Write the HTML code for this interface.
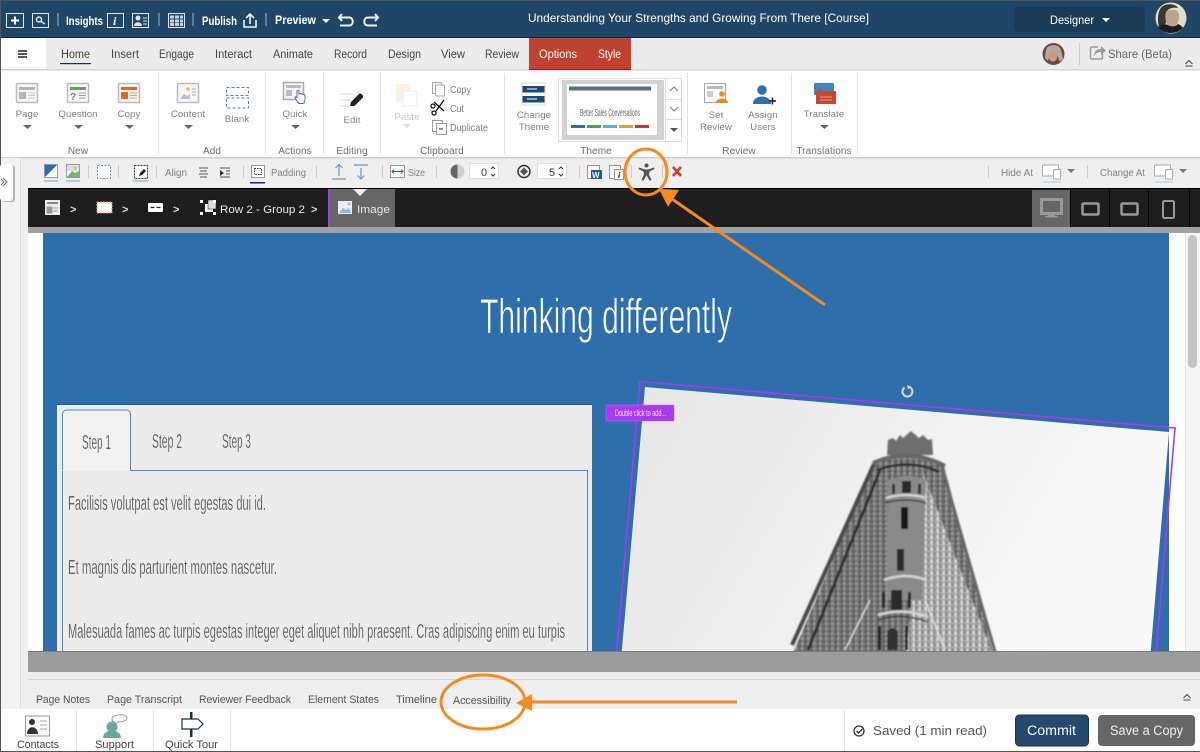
<!DOCTYPE html>
<html><head><meta charset="utf-8"><title>Understanding Your Strengths</title>
<style>
html,body{margin:0;padding:0;background:#fff;width:1200px;height:752px;overflow:hidden}
svg{display:block;position:absolute;left:0;top:0;filter:blur(.3px)}
text{font-family:"Liberation Sans",sans-serif}
.w{fill:#fff;font-size:12px;font-weight:bold}
.tt{fill:#fff;font-size:12px}
.m{fill:#444;font-size:11.5px}
.r{fill:#808080;font-size:9.6px;text-anchor:middle;letter-spacing:.1px}
.g{fill:#6e6e6e;font-size:10px;text-anchor:middle;letter-spacing:.1px}
.t{fill:#808080;font-size:10px}
.b{fill:#555;font-size:11px}
.n{fill:#4a4a4a;font-size:20px;stroke:#ececec;stroke-width:.3px}
.c{fill:#e8e8e8;font-size:11px}
</style></head><body>
<svg width="1200" height="752" viewBox="0 0 1200 752" xmlns="http://www.w3.org/2000/svg">
<defs>
<linearGradient id="sky" x1="0" y1="0" x2="1" y2="0.3"><stop offset="0" stop-color="#e6e6e6"/><stop offset="1" stop-color="#f9f9f9"/></linearGradient>
<pattern id="tex" width="6" height="5" patternUnits="userSpaceOnUse"><rect width="6" height="5" fill="#737373"/><rect x="1" y="0" width="1.500" height="3" fill="#4a4a4a"/><rect x="3.500" y="2" width="1.500" height="3" fill="#a5a5a5"/></pattern>
<pattern id="tex2" width="6" height="6" patternUnits="userSpaceOnUse"><rect width="6" height="6" fill="#a8a8a8"/><rect x="1" y="1" width="1.500" height="4" fill="#ececec"/><rect x="3.500" y="0" width="1.500" height="4" fill="#777"/></pattern>
<filter id="soft" x="-5%" y="-5%" width="110%" height="110%"><feGaussianBlur stdDeviation=".7"/></filter>
<clipPath id="cv"><rect x="28" y="233" width="1157" height="418"/></clipPath>
<clipPath id="imgc"><polygon points="645,387 1169,432 1150,651 622,651"/></clipPath>
</defs>

<!-- page base -->
<rect width="1200" height="752" fill="#fff"/>
<rect x="0" y="157" width="1200" height="552" fill="#efefef"/>

<!-- top bar -->
<rect width="1200" height="38" fill="#1f4666"/>
<rect width="1200" height="1" fill="#555"/>
<rect y="37" width="1200" height="1" fill="#10264a"/>
<g fill="none" stroke="#dfe6ec" stroke-width="1">
<rect x="6.500" y="13.500" width="17" height="14"/><path d="M15 16.500v8M11 20.500h8" stroke-width="2" stroke="#fff"/>
<rect x="32.500" y="13.500" width="16" height="14"/><circle cx="39" cy="19.500" r="2.500" stroke-width="1.500"/><path d="M41 21.500l4 2.500" stroke-width="1.500"/>
<rect x="107.500" y="13.500" width="16" height="14"/>
<rect x="132.500" y="13.500" width="16" height="14"/>
<rect x="168.500" y="13.500" width="16" height="14"/>
<path d="M58 13v13M159 13v13M193 13v13M266 13v13" stroke="#9fb3c4"/>
</g>
<text x="113" y="25" font-size="12" font-style="italic" font-weight="bold" fill="#fff" style="font-family:'Liberation Serif',serif">i</text>
<circle cx="138" cy="18" r="2.500" fill="#dfe6ec"/><path d="M134 26c0-5 8-5 8 0z" fill="#dfe6ec"/><path d="M143 18h4M143 21h4M143 24h4" stroke="#dfe6ec"/>
<g fill="#c5d1dc"><rect x="170" y="15.500" width="4" height="3"/><rect x="175" y="15.500" width="4" height="3"/><rect x="180" y="15.500" width="3" height="3"/><rect x="170" y="19.500" width="4" height="3"/><rect x="175" y="19.500" width="4" height="3"/><rect x="180" y="19.500" width="3" height="3"/><rect x="170" y="23" width="4" height="3"/><rect x="175" y="23" width="4" height="3"/><rect x="180" y="23" width="3" height="3"/></g>
<path d="M244 20v7h12v-7M250 24V14M246 18l4-4 4 4" fill="none" stroke="#eef2f5" stroke-width="1.600"/>
<text class="w" x="66" y="25" textLength="37" lengthAdjust="spacingAndGlyphs">Insights</text>
<text class="w" x="202" y="25" textLength="35" lengthAdjust="spacingAndGlyphs">Publish</text>
<text class="w" x="275" y="24" textLength="41" lengthAdjust="spacingAndGlyphs">Preview</text>
<path d="M322 19h8l-4 4z" fill="#fff"/>
<path d="M342 14l-3 3.500 3 3.500M340 17.500h9c5 0 5 8 0 8h-9" fill="none" stroke="#eef2f5" stroke-width="2"/>
<path d="M375 14l3 3.500-3 3.500M377 17.500h-9c-5 0-5 8 0 8h9" fill="none" stroke="#eef2f5" stroke-width="2"/>
<text class="tt" x="528" y="22" textLength="341" lengthAdjust="spacingAndGlyphs">Understanding Your Strengths and Growing From There [Course]</text>
<rect x="1014" y="7" width="131" height="25" rx="4" fill="#1b3a55"/>
<text class="tt" x="1050" y="24" textLength="44" lengthAdjust="spacingAndGlyphs">Designer</text>
<path d="M1102 18h8l-4 4z" fill="#fff"/>
<circle cx="1171" cy="18" r="15.500" fill="#dedecb"/>
<path d="M1159 27c-2-8-1-18 4-21 5-3 13-2 15 2-4-1-9 0-11 3-1 3-1 6 0 9l-3 7z" fill="#3a352c"/>
<path d="M1166 12c3-3 10-3 12 0 2 4 1 10-2 13-3 2-7 2-9-1-2-3-2-9-1-12z" fill="#b9a68c"/>
<path d="M1158 27c4-3 7-3 10-2 3 2 7 2 10-1 2 1 4 2 5 4-3 3-7 5-12 5-6 0-10-2-13-6z" fill="#1c1c1c"/>

<!-- menu row -->
<rect y="38" width="1200" height="31" fill="#ececec"/>
<rect y="38" width="46" height="32" fill="#fff"/>
<rect y="69" width="1200" height="1.500" fill="#d4d4d4"/>
<path d="M18 51h9M18 54h9M18 57h9" stroke="#222" stroke-width="1.500"/>
<rect x="529" y="38" width="102" height="32" fill="#bf4230"/><rect x="529" y="69" width="102" height="1" fill="#b01818"/>
<text class="m" x="61" y="58" textLength="29" lengthAdjust="spacingAndGlyphs">Home</text>
<text class="m" x="111" y="58" textLength="28" lengthAdjust="spacingAndGlyphs">Insert</text>
<text class="m" x="159" y="58" textLength="35" lengthAdjust="spacingAndGlyphs">Engage</text>
<text class="m" x="215" y="58" textLength="37" lengthAdjust="spacingAndGlyphs">Interact</text>
<text class="m" x="273" y="58" textLength="40" lengthAdjust="spacingAndGlyphs">Animate</text>
<text class="m" x="334" y="58" textLength="33" lengthAdjust="spacingAndGlyphs">Record</text>
<text class="m" x="388" y="58" textLength="33" lengthAdjust="spacingAndGlyphs">Design</text>
<text class="m" x="441" y="58" textLength="24" lengthAdjust="spacingAndGlyphs">View</text>
<text class="m" x="485" y="58" textLength="34" lengthAdjust="spacingAndGlyphs">Review</text>
<text x="539" y="58" font-size="11.500" fill="#fff" textLength="38" lengthAdjust="spacingAndGlyphs">Options</text>
<text x="598" y="58" font-size="11.500" fill="#fff" textLength="23" lengthAdjust="spacingAndGlyphs">Style</text>
<rect x="60" y="63" width="31" height="1.200" fill="#1c2f5c"/>
<circle cx="1053.500" cy="54" r="11" fill="#6b4a3a"/><path d="M1046 50c1-6 13-7 15 0l2 9-3 3-3-8c-3-1-5-1-7 0l-2 7-3-3z" fill="#b0aca4"/><ellipse cx="1053" cy="56" rx="4.500" ry="5.500" fill="#c99a7f"/>
<path d="M1079.500 43v22" stroke="#ccc"/>
<path d="M1098 47h-6a1.500 1.500 0 0 0-1.500 1.500v9a1.500 1.500 0 0 0 1.500 1.500h9a1.500 1.500 0 0 0 1.500-1.500V54" fill="none" stroke="#999" stroke-width="1.500"/>
<path d="M1094 56c0-5 3-7 7-7v-3l5 4.500-5 4.500v-3c-3 0-5 1-7 4z" fill="#999"/>
<text x="1108" y="58" font-size="12" fill="#666" textLength="64" lengthAdjust="spacingAndGlyphs">Share (Beta)</text>
<path d="M1185.500 64l3.500-3.500 3.500 3.500M1185.500 66h7" fill="none" stroke="#444" stroke-width="1"/>

<!-- ribbon -->
<rect y="70.500" width="1200" height="86.500" fill="#fff"/>
<rect y="157" width="1200" height="1.500" fill="#d0d0d0"/>
<g stroke="#e2e2e2"><path d="M158.500 73v81M265.500 73v81M323.500 73v81M380.500 73v81M504.500 73v81M687.500 73v81M791.500 73v81M857.500 73v81"/></g>
<g><rect x="16.500" y="83.500" width="21" height="19" rx="1" fill="#f6f6f6" stroke="#bbb" stroke-width="1.500"/><rect x="19" y="87" width="16" height="3" fill="#b5b5b5"/><rect x="19" y="92" width="7" height="7" fill="#b5b5b5"/><path d="M28 93h7M28 95.500h7M28 98h7" stroke="#c8c8c8"/></g>
<g><rect x="67.500" y="83.500" width="21" height="19" rx="1" fill="#f6f6f6" stroke="#bbb" stroke-width="1.500"/><rect x="70" y="87" width="16" height="3" fill="#6d9b60"/><text x="70" y="100" font-size="10" font-weight="bold" fill="#56934b">?</text><path d="M79 93h7M79 95.500h7M79 98h7" stroke="#8ab080"/></g>
<g><rect x="118.500" y="83.500" width="21" height="19" rx="1" fill="#f6f6f6" stroke="#bbb" stroke-width="1.500"/><rect x="121" y="87" width="16" height="3" fill="#dd6a28"/><rect x="121" y="92" width="7" height="7" fill="#dd6a28"/><path d="M130 93h7M130 95.500h7M130 98h7" stroke="#eba07a"/></g>
<g><rect x="177.500" y="83.500" width="21" height="19" rx="1" fill="#f8f8f8" stroke="#bbb" stroke-width="1.500"/><path d="M180 99l4-5 3 2 3-2v5z" fill="#a9c4de"/><circle cx="188" cy="89" r="1.800" fill="#f0b050"/><path d="M192 89h4M192 92h4M192 95h4" stroke="#aaa"/></g>
<g fill="none" stroke="#4d84bd" stroke-dasharray="3 2"><rect x="226.500" y="87.500" width="22" height="8"/><rect x="226.500" y="98" width="22" height="10"/></g>
<g><rect x="283.500" y="82.500" width="20" height="17" fill="#f6f6f6" stroke="#aaa" stroke-width="1.500"/><rect x="286" y="85" width="15" height="3" fill="#bbb"/><rect x="286" y="90" width="6" height="6" fill="#bbb"/></g>
<path d="M297 91c0-1 2-1 2 0v3c1-1 2 0 2 0 1-.5 2 0 2 .5 1-.5 2 0 2 1v4c0 2-1 4-2 4h-4c-1-1-3-4-4-6 0-1 1-1 2 0z" fill="#fff" stroke="#3674b5"/>
<g stroke="#d5d5d5"><path d="M340 94h14M340 100h11M340 106h8"/></g>
<path d="M350 106l1-4 8-8c1-1 3 0 3.500 1s1 2 0 3l-8 8z" fill="#222"/>
<g opacity=".55"><rect x="396" y="84" width="15" height="19" rx="1" fill="#fbe9cf"/><rect x="403" y="91" width="14" height="15" fill="#fff" stroke="#e0e0e0"/></g>
<g fill="#fff" stroke="#aaa"><rect x="432.500" y="82.500" width="9" height="11"/><rect x="435.500" y="85" width="9" height="11"/></g>
<path d="M434 102l10 9M444 100l-8 11" stroke="#111" stroke-width="1.300"/><circle cx="434" cy="113" r="2" fill="none" stroke="#111" stroke-width="1.300"/><circle cx="433" cy="106" r="2" fill="none" stroke="#111" stroke-width="1.300"/>
<g fill="#fff" stroke="#999"><rect x="432.500" y="120.500" width="10" height="11"/><rect x="436.500" y="123.500" width="10" height="11"/></g><path d="M439 129h4" stroke="#222"/>
<text class="t" x="450" y="93" textLength="21" lengthAdjust="spacingAndGlyphs">Copy</text>
<text class="t" x="450" y="112" textLength="14" lengthAdjust="spacingAndGlyphs">Cut</text>
<text class="t" x="450" y="131" textLength="38" lengthAdjust="spacingAndGlyphs">Duplicate</text>
<rect x="522" y="83" width="23" height="22" fill="#fff" stroke="#ddd"/>
<rect x="522.500" y="86" width="22" height="6.500" fill="#1c4a73"/><rect x="522.500" y="96" width="22" height="6.500" fill="#1c4a73"/>
<path d="M527 89h10M527 99h10" stroke="#fff"/>
<rect x="558.500" y="78.500" width="123" height="63" fill="#fff" stroke="#ddd"/>
<rect x="562" y="80" width="102" height="60" fill="#d2d2d2"/><rect x="567" y="84" width="90" height="51" fill="#fff"/>
<rect x="569" y="86.500" width="82" height="4" fill="#5c6e7a"/>
<text x="580" y="116" font-size="10" fill="#666" textLength="60" lengthAdjust="spacingAndGlyphs">Better Sales Conversations</text>
<rect x="571" y="125" width="14" height="3" fill="#2e6cab"/><rect x="587" y="125" width="14" height="3" fill="#4aa648"/><rect x="603" y="125" width="14" height="3" fill="#52b4d6"/><rect x="619" y="125" width="14" height="3" fill="#eb9a3b"/><rect x="635" y="125" width="14" height="3" fill="#cf3030"/>
<path d="M665.500 79v62M666 99.500h15M666 119.500h15" stroke="#ddd"/>
<path d="M670 91l4-4 4 4M670 107l4 4 4-4" fill="none" stroke="#777"/><path d="M670 128h8l-4 4z" fill="#555"/>
<rect x="704.500" y="83.500" width="21" height="19" fill="#fafafa" stroke="#aaa"/><rect x="707" y="86" width="16" height="3" fill="#bbb"/><rect x="707" y="91" width="6" height="6" fill="#ccc"/>
<circle cx="722" cy="94" r="2.800" fill="#f08a24"/><path d="M716 103c0-6 12-6 12 0z" fill="#f08a24"/>
<circle cx="762" cy="90" r="4.800" fill="#2f70b2"/><path d="M753 104c0-10 18-10 18 0z" fill="#2f70b2"/><path d="M769 101h7M772.500 97.500v7" stroke="#111" stroke-width="1.400"/>
<rect x="814" y="83" width="20" height="12" fill="#3f86c4"/><rect x="816" y="91" width="20" height="13" fill="#c8482f"/><path d="M822 88l-5 4h5z" fill="#c8482f"/><path d="M820 97h12M820 100h12" stroke="#e39a88"/>
<g fill="#666"><path d="M23 125h9l-4.500 4zM74 125h9l-4.500 4zM125 125h9l-4.500 4zM184 125h9l-4.500 4zM291 125h9l-4.500 4zM820 125h9l-4.500 4z"/></g>
<path d="M403 124h8l-4 4z" fill="#ddd"/>
<text class="r" x="27" y="117">Page</text><text class="r" x="78" y="117">Question</text><text class="r" x="129" y="117">Copy</text>
<text class="r" x="188" y="117">Content</text><text class="r" x="237" y="122">Blank</text><text class="r" x="295" y="117">Quick</text><text class="r" x="352" y="123">Edit</text>
<text class="r" x="407" y="120" style="fill:#c8c8c8">Paste</text>
<text class="r" x="534" y="118">Change</text><text class="r" x="534" y="130">Theme</text>
<text class="r" x="716" y="118">Set</text><text class="r" x="716" y="130">Review</text><text class="r" x="763" y="118">Assign</text><text class="r" x="763" y="130">Users</text><text class="r" x="824" y="117">Translate</text>
<text class="g" x="78" y="154">New</text><text class="g" x="212" y="154">Add</text><text class="g" x="295" y="154">Actions</text><text class="g" x="352" y="154">Editing</text><text class="g" x="442" y="154">Clipboard</text><text class="g" x="596" y="154">Theme</text><text class="g" x="739" y="154">Review</text><text class="g" x="824" y="154">Translations</text>

<!-- toolbar -->
<rect y="158.500" width="1200" height="30" fill="#efefef"/>
<rect x="20" y="158" width="1" height="551" fill="#dcdcdc"/>
<g><rect x="44.500" y="164.500" width="13" height="13" fill="#fff" stroke="#999"/><path d="M45 165h12L45 177z" fill="#2f6cab"/><path d="M44 181h14" stroke="#9dbcd8" stroke-width="1.500"/></g>
<g><rect x="66.500" y="164.500" width="13" height="13" fill="#fff" stroke="#999"/><rect x="67" y="165" width="12" height="6" fill="#cfe3f3"/><path d="M67 177l5-6 3 2 4-2v6z" fill="#73b85f"/><circle cx="75" cy="168" r="1.500" fill="#f0b050"/><path d="M66 181h14" stroke="#9dbcd8" stroke-width="1.500"/></g>
<rect x="97.500" y="165.500" width="13" height="13" fill="#fff" stroke="#5e93c9" stroke-dasharray="2 1.500"/>
<g><rect x="134.500" y="165.500" width="13" height="13" fill="#fff" stroke="#333" stroke-dasharray="2 1"/><path d="M139 176l1-3 4-4 2 2-4 4z" fill="#222"/><path d="M133 181h15" stroke="#9dbcd8" stroke-width="1.500"/></g>
<g stroke="#ccc"><path d="M88.500 165v13M118.500 165v13M156.500 165v13M243.500 165v13M316.500 165v13M382.500 165v13M436.500 165v13M579.500 165v13M631.500 165v13M662.500 165v13M988.500 165v13M1087.500 165v13"/></g>
<text class="t" x="165" y="176" textLength="22" lengthAdjust="spacingAndGlyphs">Align</text>
<path d="M199 168h9M200 171h7M199 174h9M200 177h7" stroke="#555"/><path d="M220 168h10M226 171h4M226 174h4M220 177h10" stroke="#555"/><path d="M220 170v6l4-3z" fill="#333"/>
<rect x="251.500" y="165.500" width="13" height="12" fill="#fff" stroke="#999"/><rect x="254.500" y="168.500" width="7" height="6" fill="none" stroke="#333" stroke-dasharray="1.500 1"/><rect x="250" y="182" width="15" height="1.500" fill="#1c2f5c"/>
<text class="t" x="271" y="176" textLength="35" lengthAdjust="spacingAndGlyphs">Padding</text>
<path d="M332 179h14M339 176v-11M335.500 168l3.500-3.500 3.500 3.500" fill="none" stroke="#6f95b8" stroke-width="1.200"/>
<path d="M354 165h14M361 168v11M357.500 175.500l3.500 3.500 3.500-3.500" fill="none" stroke="#6f95b8" stroke-width="1.200"/>
<rect x="390.500" y="165.500" width="14" height="12" fill="#fff" stroke="#999"/><path d="M392 171.500h11M394 169.500l-2 2 2 2M401 169.500l2 2-2 2" fill="none" stroke="#2360a8"/>
<text class="t" x="408" y="176" textLength="17" lengthAdjust="spacingAndGlyphs">Size</text>
<circle cx="457.500" cy="171.500" r="7" fill="#cfcfcf"/><path d="M457.500 164.500a7 7 0 0 0 0 14z" fill="#666"/>
<rect x="469.500" y="163.500" width="29" height="15" fill="#fff" stroke="#ddd"/><text x="481" y="176" font-size="11" fill="#2b3a80">0</text><path d="M491 169l2-2 2 2M491 174l2 2 2-2" fill="none" stroke="#333"/>
<circle cx="524" cy="171.500" r="6" fill="none" stroke="#333" stroke-width="1.500"/><path d="M524 167.500l4 4-4 4-4-4z" fill="#555"/>
<rect x="537.500" y="163.500" width="29" height="15" fill="#fff" stroke="#ddd"/><text x="549" y="176" font-size="11" fill="#2b3a80">5</text><path d="M559 169l2-2 2 2M559 174l2 2 2-2" fill="none" stroke="#333"/>
<rect x="587.500" y="165.500" width="12" height="13" fill="#fff" stroke="#999"/><rect x="591" y="170" width="11" height="9" fill="#1e5aa6"/><text x="592" y="178" font-size="8" font-weight="bold" fill="#fff">W</text>
<rect x="609.500" y="165.500" width="11" height="13" fill="#fff" stroke="#999"/><rect x="614.500" y="169.500" width="9" height="10" fill="#fff" stroke="#999"/><text x="618" y="178" font-size="8" font-weight="bold" font-style="italic" fill="#111">i</text>
<g fill="#555"><circle cx="646.500" cy="165.500" r="2"/><path d="M639 167.500l6 2h3l6-2 .6 1.500-5.100 2.500-.5 3 2.500 5.500-1.800.8-3.200-5.500-3.200 5.500-1.800-.8 2.500-5.500-.5-3-5.100-2.500z"/></g>
<path d="M673 167l8 9M681 167l-8 9" stroke="#c9432f" stroke-width="2.800"/>
<text class="t" x="1001" y="176" textLength="32" lengthAdjust="spacingAndGlyphs">Hide At</text>
<g><rect x="1042.500" y="165" width="16" height="11" fill="#fff" stroke="#aaa"/><rect x="1053.500" y="169.500" width="7" height="9.500" fill="#fff" stroke="#aaa"/><path d="M1043 182h18" stroke="#b3cde3" stroke-width="1.300"/><path d="M1067 169h8l-4 4z" fill="#777"/></g>
<text class="t" x="1100" y="176" textLength="45" lengthAdjust="spacingAndGlyphs">Change At</text>
<g><rect x="1154.500" y="165" width="16" height="11" fill="#fff" stroke="#aaa"/><rect x="1165.500" y="169.500" width="7" height="9.500" fill="#fff" stroke="#aaa"/><path d="M1155 182h18" stroke="#b3cde3" stroke-width="1.300"/><path d="M1179 169h8l-4 4z" fill="#777"/></g>

<!-- dark crumb bar -->
<rect x="28" y="189" width="1172" height="38" fill="#1e1e1e"/>
<rect x="28" y="188" width="1172" height="1" fill="#000"/>
<rect x="28" y="227" width="1172" height="6" fill="#a2a2a2"/>
<rect x="45" y="200" width="15" height="15" fill="#eee"/><path d="M47 203h11" stroke="#888" stroke-width="2"/><path d="M47 207h5v6h-5zM53.500 208h4.500M53.500 211h4.500" fill="#999" stroke="#999"/>
<rect x="97" y="202" width="15" height="11" fill="#fff" stroke="#e8901f" stroke-dasharray="2 1"/>
<rect x="148" y="203" width="15" height="9" rx="1" fill="#fff"/><path d="M150.500 207.500h4M156.500 207.500h4" stroke="#222" stroke-width="1.300"/>
<text x="70" y="213" font-size="11" fill="#ddd" font-weight="bold">&gt;</text><text x="122" y="213" font-size="11" fill="#ddd" font-weight="bold">&gt;</text><text x="173" y="213" font-size="11" fill="#ddd" font-weight="bold">&gt;</text><text x="311" y="213" font-size="11" fill="#ddd" font-weight="bold">&gt;</text>
<rect x="205" y="204" width="8" height="8" fill="#fff"/><rect x="208" y="200" width="8" height="9" fill="#ddd" stroke="#111" stroke-width=".5"/><g fill="#fff"><rect x="200" y="200" width="3" height="3"/><rect x="213" y="200" width="3" height="3"/><rect x="200" y="212" width="3" height="3"/><rect x="213" y="212" width="3" height="3"/></g>
<text x="220" y="213" font-size="11" fill="#e8e8e8" textLength="85" lengthAdjust="spacingAndGlyphs">Row 2 - Group 2</text>
<rect x="328" y="189" width="2" height="38" fill="#a040e0"/>
<rect x="330" y="189" width="65" height="38" fill="#666"/>
<path d="M353 189h14l-7 7z" fill="#efefef"/>
<rect x="338" y="201" width="14" height="13" fill="#e5eef7"/><path d="M339 213l4-5 3 2 3-2 2 5z" fill="#8fb5da"/><circle cx="349" cy="204" r="1.500" fill="#f0b050"/>
<text x="357" y="213" font-size="11" fill="#e8e8e8" textLength="33" lengthAdjust="spacingAndGlyphs">Image</text>
<rect x="1032" y="190" width="38" height="37" fill="#666"/>
<path d="M1070.500 190v37M1109.500 190v37M1148.500 190v37M1189.500 190v37" stroke="#000"/>
<rect x="1041.500" y="199.500" width="20" height="14" fill="none" stroke="#999" stroke-width="3"/><rect x="1048" y="214" width="7" height="2" fill="#999"/><rect x="1045" y="216" width="13" height="1.500" fill="#999"/>
<rect x="1082.500" y="203.500" width="16" height="11" rx="1" fill="none" stroke="#999" stroke-width="2.500"/>
<rect x="1121.500" y="203.500" width="16" height="11" rx="1" fill="none" stroke="#999" stroke-width="2.500"/>
<rect x="1163" y="201" width="11" height="17" rx="1.500" fill="none" stroke="#999" stroke-width="2"/>

<!-- canvas -->
<rect x="28" y="233" width="15" height="418" fill="#fff"/>
<rect x="43" y="233" width="1126" height="418" fill="#2d6eab"/>
<rect x="1169" y="233" width="16" height="418" fill="#fff"/>
<rect x="1185" y="233" width="15" height="418" fill="#f5f5f5"/>
<rect x="1188" y="235" width="9" height="133" rx="4.500" fill="#c3c3c3"/>
<rect x="1185" y="233" width="1" height="418" fill="#e2e2e2"/>

<text x="480" y="333" font-size="49" fill="#fff" stroke="#2d6eab" stroke-width=".8" textLength="252" lengthAdjust="spacingAndGlyphs">Thinking differently</text>

<!-- tabs panel -->
<g clip-path="url(#cv)">
<rect x="57" y="404" width="535" height="260" fill="#ececec"/>
<rect x="57" y="404" width="535" height="1" fill="#1d5a94"/>
<path d="M62.500 660V470.500" stroke="#5a87bb"/>
<path d="M130.500 470.500H587.500V660" fill="none" stroke="#5a87bb"/>
<path d="M63 411h67v60H63z" fill="#f1f1f1"/>
<path d="M62.500 470V414a4 4 0 0 1 4-4h60a4 4 0 0 1 4 4v56.500" fill="none" stroke="#5a87bb"/>
<text class="n" x="82" y="449" textLength="29" lengthAdjust="spacingAndGlyphs">Step 1</text>
<text class="n" x="152" y="448" textLength="30" lengthAdjust="spacingAndGlyphs">Step 2</text>
<text class="n" x="222" y="448" textLength="29" lengthAdjust="spacingAndGlyphs">Step 3</text>
<text class="n" x="68" y="510" textLength="198" lengthAdjust="spacingAndGlyphs">Facilisis volutpat est velit egestas dui id.</text>
<text class="n" x="68" y="574" textLength="209" lengthAdjust="spacingAndGlyphs">Et magnis dis parturient montes nascetur.</text>
<text class="n" x="68" y="638" textLength="497" lengthAdjust="spacingAndGlyphs">Malesuada fames ac turpis egestas integer eget aliquet nibh praesent. Cras adipiscing enim eu turpis</text>

<!-- image -->
<polygon points="645,387 1169,432 1150,660 621,660" fill="url(#sky)"/>
<g clip-path="url(#imgc)">
<g filter="url(#soft)">
<path d="M887 455l1-15 5-2 3 3 4-6 3 3 8-7 8 7 4-3 5 5 4-1 1 16z" fill="#6e6e6e"/>
<path d="M874 464q36-16 70 2L995 660H790z" fill="url(#tex)"/>
<path d="M922 470L995 660H906z" fill="url(#tex2)"/>
<path d="M874 464L792 645" fill="none" stroke="#4a4a4a" stroke-width="4"/>
<path d="M880 470L808 650" fill="none" stroke="#2e2e2e" stroke-width="3"/>
<path d="M941 464L996 655" fill="none" stroke="#666" stroke-width="3"/>
<path d="M873 463q36-16 72 3" fill="none" stroke="#666" stroke-width="4"/>
<path d="M877 470q33-12 62 2" fill="none" stroke="#2c2c2c" stroke-width="2.500"/>
<path d="M888 480q20-8 38 0l-3 120h-36z" fill="#8a8a8a"/>
<path d="M886 498q20-6 40 0M884 580q22-8 42 0M878 615q25-8 50 2" fill="none" stroke="#d5d5d5" stroke-width="2.500"/>
<path d="M885 503q20-6 41 0M878 620q25-8 50 2" fill="none" stroke="#3a3a3a" stroke-width="1.500"/>
<rect x="902" y="481" width="9" height="12" fill="#2a2a2a"/><rect x="892" y="484" width="3" height="10" fill="#333"/><rect x="918" y="484" width="3" height="10" fill="#333"/>
<rect x="901" y="507" width="7" height="22" fill="#151515"/>
<rect x="897" y="549" width="7" height="22" fill="#2c2c2c"/>
<rect x="891" y="590" width="11" height="20" fill="#2a2a2a"/><rect x="882" y="592" width="3" height="16" fill="#222"/><rect x="908" y="592" width="3" height="16" fill="#222"/>
<path d="M887 650v-18q6-8 11 0v18z" fill="#333"/><rect x="878" y="626" width="3" height="24" fill="#222"/><rect x="905" y="626" width="3" height="24" fill="#222"/>
<path d="M870 600L845 650M925 600L945 650" stroke="#e8e8e8" stroke-width="1.200"/>
</g>
</g>
<polygon points="640,381.500 1175,428 1155.500,660 616,660" fill="none" stroke="#a93af0" stroke-width="1.600"/>
</g>
<path d="M904.500 387.500a5 5 0 1 0 5-.5" fill="none" stroke="#d8d8d8" stroke-width="2"/><path d="M907 385l4 1.500-3 3z" fill="#d8d8d8"/>
<rect x="606" y="405" width="68" height="16" fill="#a93af0" stroke="#c070f5" stroke-width=".5"/>
<text x="615" y="416" font-size="9" fill="#f4e6ff" textLength="51" lengthAdjust="spacingAndGlyphs">Double click to add...</text>

<!-- lower gray + tabs -->
<rect x="28" y="651" width="1172" height="21" fill="#9c9c9c"/>
<rect x="28" y="651" width="1172" height="1" fill="#7a7a7a"/>
<rect x="21" y="672" width="1179" height="37" fill="#efefef"/>
<rect x="28" y="679" width="1172" height="1" fill="#d6d6d6"/>
<text class="b" x="36" y="703" textLength="54" lengthAdjust="spacingAndGlyphs">Page Notes</text>
<text class="b" x="107" y="703" textLength="75" lengthAdjust="spacingAndGlyphs">Page Transcript</text>
<text class="b" x="199" y="703" textLength="92" lengthAdjust="spacingAndGlyphs">Reviewer Feedback</text>
<text class="b" x="308" y="703" textLength="71" lengthAdjust="spacingAndGlyphs">Element States</text>
<text class="b" x="396" y="703" textLength="41" lengthAdjust="spacingAndGlyphs">Timeline</text>
<text class="b" x="453" y="704" textLength="58" lengthAdjust="spacingAndGlyphs">Accessibility</text>
<path d="M1183.500 698l3.500-3.500 3.500 3.500M1183.500 700h7" fill="none" stroke="#444"/>

<!-- bottom bar -->
<rect y="709" width="1200" height="42" fill="#fff"/>
<rect y="751" width="1200" height="1" fill="#555"/>
<path d="M76.500 710v41M153.500 710v41M230.500 710v41M844.500 710v41" stroke="#e4e4e4"/>
<rect x="25.500" y="716" width="24" height="20" fill="#fafafa" stroke="#999"/>
<circle cx="32" cy="722" r="3" fill="#333"/><path d="M27 734c0-9 11-9 11 0z" fill="#333"/><path d="M40 721h7M40 725h7M40 729h7" stroke="#aaa"/>
<circle cx="112" cy="727" r="5.500" fill="#6ba899"/><path d="M103 738c0-10 18-10 18 0z" fill="#6ba899"/>
<path d="M112 719c0-5 15-6 15-1 0 3-5 4-9 4l-3 2v-2c-2 0-3-1-3-3z" fill="#fff" stroke="#999"/>
<path d="M182 719h16l5 5-5 5h-16z" fill="#fff" stroke="#1e2f4a" stroke-width="1.200"/><rect x="190" y="712" width="2.500" height="7" fill="#1e2f4a"/><rect x="190" y="729" width="2.500" height="8" fill="#1e2f4a"/>
<text class="b" x="17" y="748" textLength="42" lengthAdjust="spacingAndGlyphs" style="fill:#444">Contacts</text>
<text class="b" x="95" y="748" textLength="39" lengthAdjust="spacingAndGlyphs" style="fill:#444">Support</text>
<text class="b" x="165" y="748" textLength="53" lengthAdjust="spacingAndGlyphs" style="fill:#444">Quick Tour</text>
<circle cx="859" cy="731" r="5" fill="none" stroke="#333" stroke-width="1.300"/><path d="M856.500 731l2 2 4-4" fill="none" stroke="#333" stroke-width="1.300"/>
<text x="873" y="735" font-size="13" fill="#555" textLength="114" lengthAdjust="spacingAndGlyphs">Saved (1 min read)</text>
<rect x="1015.500" y="715" width="73" height="31" rx="4" fill="#27496f" stroke="#1a3350"/>
<text x="1027" y="735" font-size="13.500" fill="#fff" textLength="49" lengthAdjust="spacingAndGlyphs">Commit</text>
<rect x="1098" y="715" width="97" height="31" rx="4" fill="#666"/>
<text x="1110" y="735" font-size="13.500" fill="#f0f0f0" textLength="73" lengthAdjust="spacingAndGlyphs">Save a Copy</text>

<!-- left gutter -->
<rect x="0" y="0" width="1" height="752" fill="#555"/>
<rect x="1" y="158" width="19" height="551" fill="#f2f2f2"/>
<rect x="21" y="189" width="7" height="483" fill="#efefef"/>
<rect x="1" y="165" width="14" height="37" rx="3" fill="#000" opacity=".25"/>
<rect x="0" y="164" width="13" height="37" rx="3" fill="#fff"/>
<path d="M1 179l3 3-3 3M3 178l4 4-4 4" fill="none" stroke="#666"/>

<!-- annotations -->
<g fill="none" stroke="#f58a1f" stroke-width="3">
<ellipse cx="646" cy="172" rx="21" ry="23"/>
<ellipse cx="483" cy="702" rx="42" ry="27"/>
<path d="M825 305L672 199"/>
<path d="M737 702H530"/>
</g>
<path d="M659 189l20 1-11 17z" fill="#f58a1f"/>
<path d="M516 703l16-9v17z" fill="#f58a1f"/>
</svg>
</body></html>
